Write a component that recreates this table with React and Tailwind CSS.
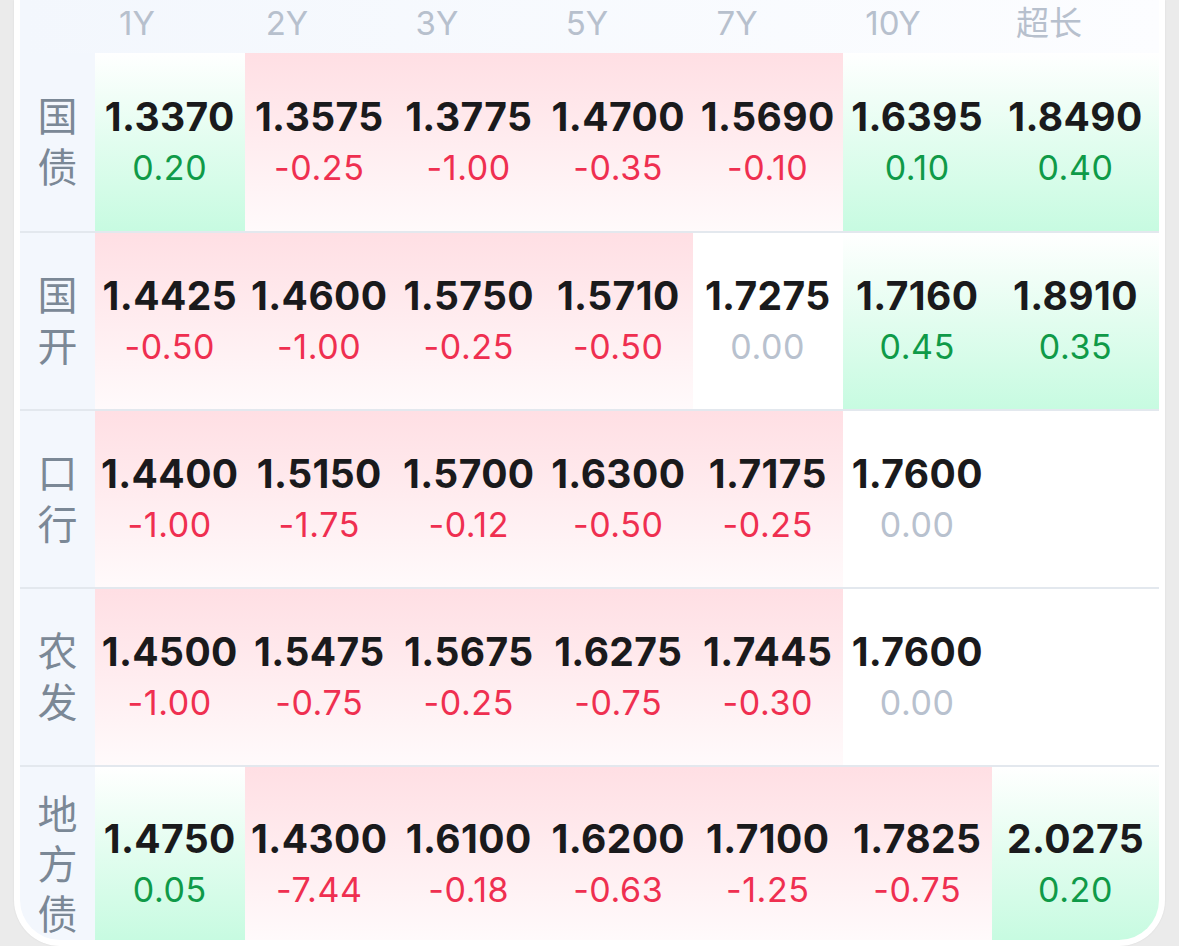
import React from "react";

const cols = ["1Y", "2Y", "3Y", "5Y", "7Y", "10Y", "超长"];

// tone: g = up (green), r = down (red), n = flat, e = empty
const rows = [
  {
    name: "国债",
    cells: [
      ["1.3370", "0.20", "g"],
      ["1.3575", "-0.25", "r"],
      ["1.3775", "-1.00", "r"],
      ["1.4700", "-0.35", "r"],
      ["1.5690", "-0.10", "r"],
      ["1.6395", "0.10", "g"],
      ["1.8490", "0.40", "g"],
    ],
  },
  {
    name: "国开",
    cells: [
      ["1.4425", "-0.50", "r"],
      ["1.4600", "-1.00", "r"],
      ["1.5750", "-0.25", "r"],
      ["1.5710", "-0.50", "r"],
      ["1.7275", "0.00", "n"],
      ["1.7160", "0.45", "g"],
      ["1.8910", "0.35", "g"],
    ],
  },
  {
    name: "口行",
    cells: [
      ["1.4400", "-1.00", "r"],
      ["1.5150", "-1.75", "r"],
      ["1.5700", "-0.12", "r"],
      ["1.6300", "-0.50", "r"],
      ["1.7175", "-0.25", "r"],
      ["1.7600", "0.00", "n"],
      [null, null, "e"],
    ],
  },
  {
    name: "农发",
    cells: [
      ["1.4500", "-1.00", "r"],
      ["1.5475", "-0.75", "r"],
      ["1.5675", "-0.25", "r"],
      ["1.6275", "-0.75", "r"],
      ["1.7445", "-0.30", "r"],
      ["1.7600", "0.00", "n"],
      [null, null, "e"],
    ],
  },
  {
    name: "地方债",
    cells: [
      ["1.4750", "0.05", "g"],
      ["1.4300", "-7.44", "r"],
      ["1.6100", "-0.18", "r"],
      ["1.6200", "-0.63", "r"],
      ["1.7100", "-1.25", "r"],
      ["1.7825", "-0.75", "r"],
      ["2.0275", "0.20", "g"],
    ],
  },
];

const bgByTone = {
  g: "bg-gradient-to-b from-white via-[#e2fdef] to-[#c7fbe1]",
  r: "bg-gradient-to-b from-[#ffdfe4] to-[#fffafb]",
  n: "bg-white",
  e: "bg-white",
};

const textByTone = {
  g: "text-[#0f9a48]",
  r: "text-[#ef2f50]",
  n: "text-[#b8c1ce]",
  e: "",
};

const grid = "grid grid-cols-[75px_repeat(6,149.5px)_1fr]";

const Cell = ({ value, change, tone }) => (
  <div className="flex flex-col items-center justify-center">
    {value && (
      <>
        <div className="text-[39px] leading-[44px] font-bold text-[#1a1a1c] tracking-[0.4px]">
          {value}
        </div>
        <div className={`mt-[7px] text-[34px] leading-[44px] tracking-[0.6px] ${textByTone[tone]}`}>
          {change}
        </div>
      </>
    )}
  </div>
);

export default function App() {
  return (
    <div
      className="h-[946px] overflow-hidden bg-[#ebebeb] px-[14px]"
      style={{ fontFamily: "Inter, 'Noto Sans CJK SC', sans-serif" }}
    >
      <div className="h-full bg-white px-[6px] pb-[6px] rounded-b-[46px] shadow-[0_0_2px_rgba(0,0,0,0.08)]">
        <div className="h-full flex flex-col rounded-b-[40px] overflow-hidden">
          {/* Header */}
          <div className="grid grid-cols-[42px_150px_150px_150px_150px_150px_162px_150px] h-[53px] bg-gradient-to-r from-[#f3f7fd] to-[#fcfdff]">
            <div />
            {cols.map((c) => (
              <div
                key={c}
                className="text-center text-[33px] leading-[46px] text-[#b7c0cd]"
              >
                {c}
              </div>
            ))}
          </div>

          {/* Rows */}
          {rows.map((row, i) => {
            const last = i === rows.length - 1;
            return (
              <div
                key={row.name}
                className={`${grid} ${last ? "flex-1" : "h-[178px]"} ${
                  i > 0 ? "border-t-2 border-[#e3e8ee]" : ""
                }`}
              >
                <div
                  className={`flex flex-col items-center justify-center bg-[#f3f7fd] text-[40px] text-[#7b8896] ${
                    last ? "leading-[50px] pt-[22px]" : "leading-[51px]"
                  }`}
                >
                  {row.name.split("").map((ch, k) => (
                    <span key={k}>{ch}</span>
                  ))}
                </div>
                {row.cells.map(([v, c, t], k) => (
                  <div
                    key={k}
                    className={`grid ${last ? "pt-[22px]" : ""} ${bgByTone[t]}`}
                  >
                    <Cell value={v} change={c} tone={t} />
                  </div>
                ))}
              </div>
            );
          })}
        </div>
      </div>
    </div>
  );
}
